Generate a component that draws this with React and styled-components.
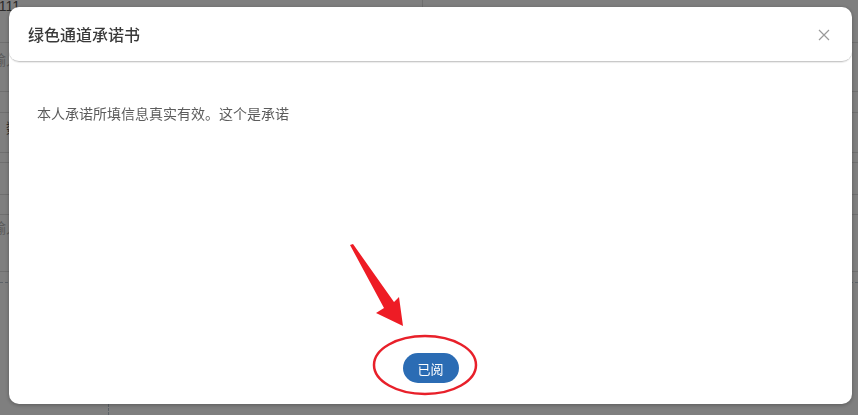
import React from "react";
import styled, { createGlobalStyle } from "styled-components";

const GlobalStyle = createGlobalStyle`
  html, body {
    margin: 0;
    padding: 0;
    width: 858px;
    height: 415px;
    overflow: hidden;
    background: #fff;
    font-family: "Noto Sans CJK SC", "Noto Sans", sans-serif;
  }
`;

const rows = [
  { h: 43, label: "1111", tone: "dark", offset: -2 },
  { h: 49, label: "输入", tone: "light", offset: 9 },
  { h: 21 },
  { h: 40, label: "数", tone: "dark", offset: 7 },
  { h: 10 },
  { h: 32, label: "0", tone: "dark", offset: 9 },
  { h: 20 },
  { h: 57, label: "输入", tone: "light", offset: 5 },
];

export default function App() {
  return (
    <>
      <GlobalStyle />
      <Page>
        <Table>
          {rows.map((r, i) => (
            <Row key={i} style={{ height: r.h }}>
              <Label tone={r.tone} offset={r.offset}>{r.label}</Label>
            </Row>
          ))}
          <DashRow />
        </Table>
        <ColLineTop />
        <ColLineBottom />
      </Page>

      <Overlay>
        <Modal>
          <Header>
            <Title>绿色通道承诺书</Title>
            <Close aria-label="close">
              <svg width="12" height="12" viewBox="0 0 12 12">
                <path d="M1 1L11 11M11 1L1 11" stroke="#9a9a9a" strokeWidth="1.2" fill="none" />
              </svg>
            </Close>
          </Header>
          <Body>本人承诺所填信息真实有效。这个是承诺</Body>
          <Footer>
            <ReadButton>已阅</ReadButton>
          </Footer>
        </Modal>

        <Annotation viewBox="0 0 858 415" width="858" height="415">
          <polygon
            points="350,245 353,244 394,302 399,297 403,326 376,313 384,308"
            fill="#ee1c25"
          />
          <ellipse cx="425" cy="365" rx="51" ry="29" fill="none" stroke="#e8202a" strokeWidth="2.5" />
        </Annotation>
      </Overlay>
    </>
  );
}

const Page = styled.div`
  position: relative;
  width: 858px;
  height: 415px;
  background: #fff;
`;

const Table = styled.div`
  display: flex;
  flex-direction: column;
`;

const Row = styled.div`
  display: flex;
  align-items: flex-start;
  border-bottom: 1px solid #dedede;
  box-sizing: border-box;
`;

const Label = styled.div`
  width: 20px;
  display: flex;
  justify-content: flex-end;
  white-space: nowrap;
  font-size: 14px;
  line-height: 16px;
  margin-top: ${(p) => p.offset || 0}px;
  color: ${(p) => (p.tone === "light" ? "#b5b5b5" : "#555")};
  font-family: "Liberation Sans", "Noto Sans CJK SC", sans-serif;
`;

const DashRow = styled.div`
  height: 10px;
  border-bottom: 1px dashed #b8c4d0;
`;

const ColLineTop = styled.div`
  position: absolute;
  left: 422px;
  top: 0;
  height: 10px;
  border-left: 1px solid #dedede;
`;

const ColLineBottom = styled.div`
  position: absolute;
  left: 108px;
  top: 400px;
  height: 15px;
  border-left: 1px dashed #b8c4d0;
`;

const Overlay = styled.div`
  position: fixed;
  inset: 0;
  background: rgba(0, 0, 0, 0.5);
  padding: 7px 6px 11px 9px;
  box-sizing: border-box;
  display: flex;
`;

const Modal = styled.div`
  flex: 1;
  background: #fff;
  border-radius: 10px;
  display: flex;
  flex-direction: column;
  box-shadow: 0 1px 4px rgba(0, 0, 0, 0.3);
`;

const Header = styled.div`
  height: 55px;
  box-sizing: border-box;
  display: flex;
  align-items: center;
  justify-content: space-between;
  padding: 0 20px 0 19px;
  border-radius: 10px;
  border-bottom: 1.5px solid #c9c9c9;
  box-shadow: 0 1px 1px rgba(0, 0, 0, 0.08);
`;

const Title = styled.h3`
  margin: 0;
  font-size: 16px;
  font-weight: 500;
  color: #3a3a3a;
`;

const Close = styled.span`
  display: flex;
  align-items: center;
  justify-content: center;
  width: 16px;
  height: 16px;
  margin-top: 2px;
  cursor: pointer;
`;

const Body = styled.div`
  flex: 1;
  padding: 41px 28px 0;
  font-size: 14px;
  line-height: 20px;
  color: #5c5c5c;
`;

const Footer = styled.div`
  display: flex;
  justify-content: center;
  padding-bottom: 21px;
`;

const ReadButton = styled.button`
  width: 56px;
  height: 30px;
  border: none;
  border-radius: 15px;
  background: #2b6cb4;
  color: #fff;
  font-size: 13px;
  font-family: "Noto Sans CJK SC", sans-serif;
  padding: 0;
  cursor: pointer;
`;

const Annotation = styled.svg`
  position: absolute;
  left: 0;
  top: 0;
  pointer-events: none;
`;
